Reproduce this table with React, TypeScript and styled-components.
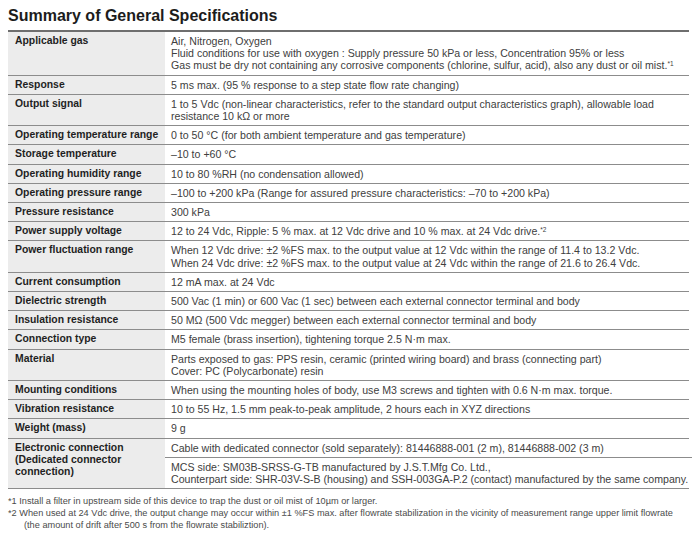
import React from 'react';
import styled, { createGlobalStyle } from 'styled-components';

const GlobalStyle = createGlobalStyle`
  html, body {
    margin: 0;
    padding: 0;
    background: #fff;
  }
  body {
    font-family: "Liberation Sans", Arial, Helvetica, sans-serif;
  }
`

const Page = styled.div`
  width: 681px;
  padding: 6px 8px 0 8px;
`

const Title = styled.h1`
  margin: 0 0 5px 0;
  font-size: 16px;
  line-height: 19px;
  font-weight: bold;
  color: #1c1c1c;
`

const Table = styled.div`
  border-top: 2px solid #6e6e6e;
`

const Row = styled.div`
  display: grid;
  grid-template-columns: 157px 1fr;
  border-bottom: 1px solid #8c8c8c;
`

const Label = styled.div`
  background: #ececec;
  padding: 3px 4px 3px 7px;
  font-size: 10.4px;
  line-height: 12.2px;
  font-weight: bold;
  color: #1f1f1f;
`

const Value = styled.div`
  padding: 3px 4px 3px 6px;
  font-size: 10.6px;
  line-height: 12.2px;
  color: #404040;
  white-space: nowrap;
`

const SubValues = styled.div`
  display: flex;
  flex-direction: column;
`

const SubValue = styled(Value)<{ $divided?: boolean }>`
  border-top: ${p => (p.$divided ? '1px solid #8c8c8c' : 'none')};
`

const Sup = styled.sup`
  font-size: 6.5px;
  line-height: 0;
  vertical-align: 3px;
`

const Notes = styled.div`
  margin-top: 6px;
  font-size: 9.2px;
  line-height: 12px;
  color: #4a4a4a;
  white-space: nowrap;
`

const Note = styled.p`
  margin: 0;
  padding-left: 16px;
  text-indent: -16px;
`

type Spec = {
  label: React.ReactNode;
  value: React.ReactNode;
}

const specs: Spec[] = [
  {
    label: 'Applicable gas',
    value: (
      <>
        Air, Nitrogen, Oxygen<br />
        Fluid conditions for use with oxygen : Supply pressure 50 kPa or less, Concentration 95% or less<br />
        Gas must be dry not containing any corrosive components (chlorine, sulfur, acid), also any dust or oil mist.<Sup>*1</Sup>
      </>
    ),
  },
  { label: 'Response', value: '5 ms max. (95 % response to a step state flow rate changing)' },
  {
    label: 'Output signal',
    value: (
      <>
        1 to 5 Vdc (non-linear characteristics, refer to the standard output characteristics graph), allowable load<br />
        resistance 10 kΩ or more
      </>
    ),
  },
  { label: 'Operating temperature range', value: '0 to 50 °C (for both ambient temperature and gas temperature)' },
  { label: 'Storage temperature', value: '–10 to +60 °C' },
  { label: 'Operating humidity range', value: '10 to 80 %RH (no condensation allowed)' },
  { label: 'Operating pressure range', value: '–100 to +200 kPa (Range for assured pressure characteristics: –70 to +200 kPa)' },
  { label: 'Pressure resistance', value: '300 kPa' },
  {
    label: 'Power supply voltage',
    value: (
      <>
        12 to 24 Vdc, Ripple: 5 % max. at 12 Vdc drive and 10 % max. at 24 Vdc drive.<Sup>*2</Sup>
      </>
    ),
  },
  {
    label: 'Power fluctuation range',
    value: (
      <>
        When 12 Vdc drive: ±2 %FS max. to the output value at 12 Vdc within the range of 11.4 to 13.2 Vdc.<br />
        When 24 Vdc drive: ±2 %FS max. to the output value at 24 Vdc within the range of 21.6 to 26.4 Vdc.
      </>
    ),
  },
  { label: 'Current consumption', value: '12 mA max. at 24 Vdc' },
  { label: 'Dielectric strength', value: '500 Vac (1 min) or 600 Vac (1 sec) between each external connector terminal and body' },
  { label: 'Insulation resistance', value: '50 MΩ (500 Vdc megger) between each external connector terminal and body' },
  { label: 'Connection type', value: 'M5 female (brass insertion), tightening torque 2.5 N·m max.' },
  {
    label: 'Material',
    value: (
      <>
        Parts exposed to gas: PPS resin, ceramic (printed wiring board) and brass (connecting part)<br />
        Cover: PC (Polycarbonate) resin
      </>
    ),
  },
  { label: 'Mounting conditions', value: 'When using the mounting holes of body, use M3 screws and tighten with 0.6 N·m max. torque.' },
  { label: 'Vibration resistance', value: '10 to 55 Hz, 1.5 mm peak-to-peak amplitude, 2 hours each in XYZ directions' },
  { label: 'Weight (mass)', value: '9 g' },
]

export default function App() {
  return (
    <>
      <GlobalStyle />
      <Page>
        <Title>Summary of General Specifications</Title>
        <Table>
          {specs.map((s, i) => (
            <Row key={i}>
              <Label>{s.label}</Label>
              <Value>{s.value}</Value>
            </Row>
          ))}
          <Row>
            <Label>
              Electronic connection<br />
              (Dedicated connector<br />
              connection)
            </Label>
            <SubValues>
              <SubValue>Cable with dedicated connector (sold separately): 81446888-001 (2 m), 81446888-002 (3 m)</SubValue>
              <SubValue $divided>
                MCS side: SM03B-SRSS-G-TB manufactured by J.S.T.Mfg Co. Ltd.,<br />
                Counterpart side: SHR-03V-S-B (housing) and SSH-003GA-P.2 (contact) manufactured by the same company.
              </SubValue>
            </SubValues>
          </Row>
        </Table>
        <Notes>
          <Note>*1 Install a filter in upstream side of this device to trap the dust or oil mist of 10µm or larger.</Note>
          <Note>
            *2 When used at 24 Vdc drive, the output change may occur within ±1 %FS max. after flowrate stabilization in the vicinity of measurement range upper limit flowrate<br />
            (the amount of drift after 500 s from the flowrate stabiliztion).
          </Note>
        </Notes>
      </Page>
    </>
  )
}
